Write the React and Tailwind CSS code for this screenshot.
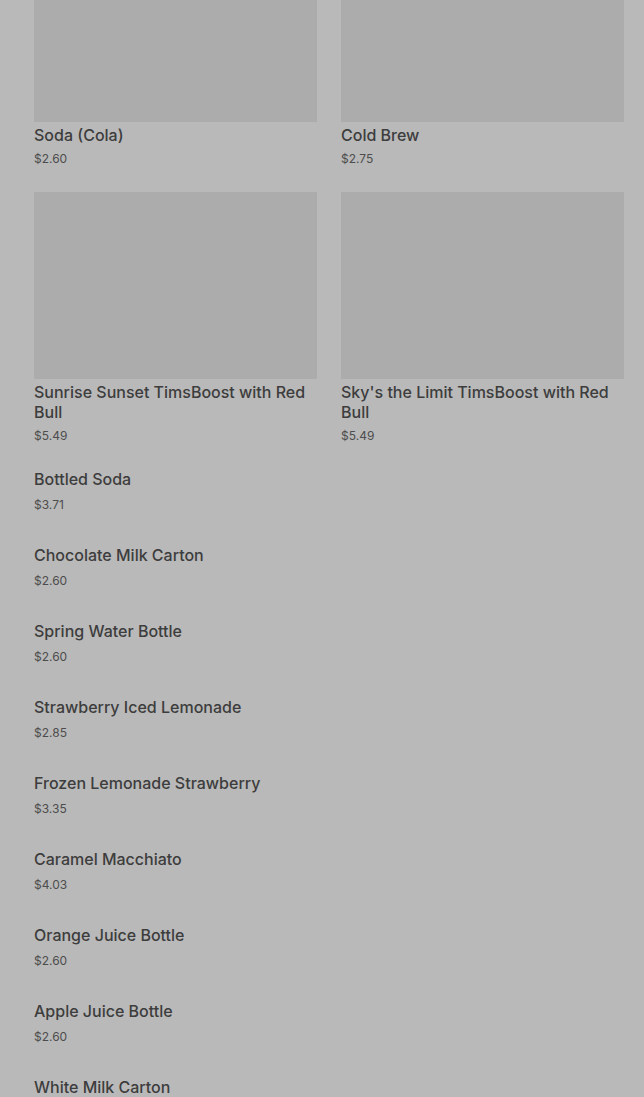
const gridItems = [
  { name: "Soda (Cola)", price: "$2.60" },
  { name: "Cold Brew", price: "$2.75" },
  { name: "Sunrise Sunset TimsBoost with Red Bull", price: "$5.49" },
  { name: "Sky's the Limit TimsBoost with Red Bull", price: "$5.49" },
];

const listItems = [
  { name: "Bottled Soda", price: "$3.71" },
  { name: "Chocolate Milk Carton", price: "$2.60" },
  { name: "Spring Water Bottle", price: "$2.60" },
  { name: "Strawberry Iced Lemonade", price: "$2.85" },
  { name: "Frozen Lemonade Strawberry", price: "$3.35" },
  { name: "Caramel Macchiato", price: "$4.03" },
  { name: "Orange Juice Bottle", price: "$2.60" },
  { name: "Apple Juice Bottle", price: "$2.60" },
  { name: "White Milk Carton", price: "$2.60" },
];

export default function App() {
  return (
    <div
      className="h-screen bg-[#b9b9b9] pl-[34px] pr-5 overflow-hidden"
      style={{ fontFamily: "Inter, Roboto, 'Liberation Sans', sans-serif" }}
    >
      {/* product cards (scrolled, top row cut off) */}
      <div className="grid grid-cols-2 gap-x-6 gap-y-[25px] -mt-[65px]">
        {gridItems.map((item) => (
          <div key={item.name} className="flex flex-col">
            <div className="h-[187px] bg-[#acacac]" />
            <div className="mt-[3px] text-base leading-5 font-medium text-[#3d3d3d]">
              {item.name}
            </div>
            <div className="mt-[6px] text-[12px] leading-4 text-[#4d4d4d]">
              {item.price}
            </div>
          </div>
        ))}
      </div>

      {/* plain list */}
      <div className="flex flex-col gap-[32px] mt-[25px]">
        {listItems.map((item) => (
          <div key={item.name} className="flex flex-col">
            <div className="text-base leading-5 font-medium text-[#3d3d3d]">
              {item.name}
            </div>
            <div className="mt-[8px] text-[12px] leading-4 text-[#4d4d4d]">
              {item.price}
            </div>
          </div>
        ))}
      </div>
    </div>
  );
}
